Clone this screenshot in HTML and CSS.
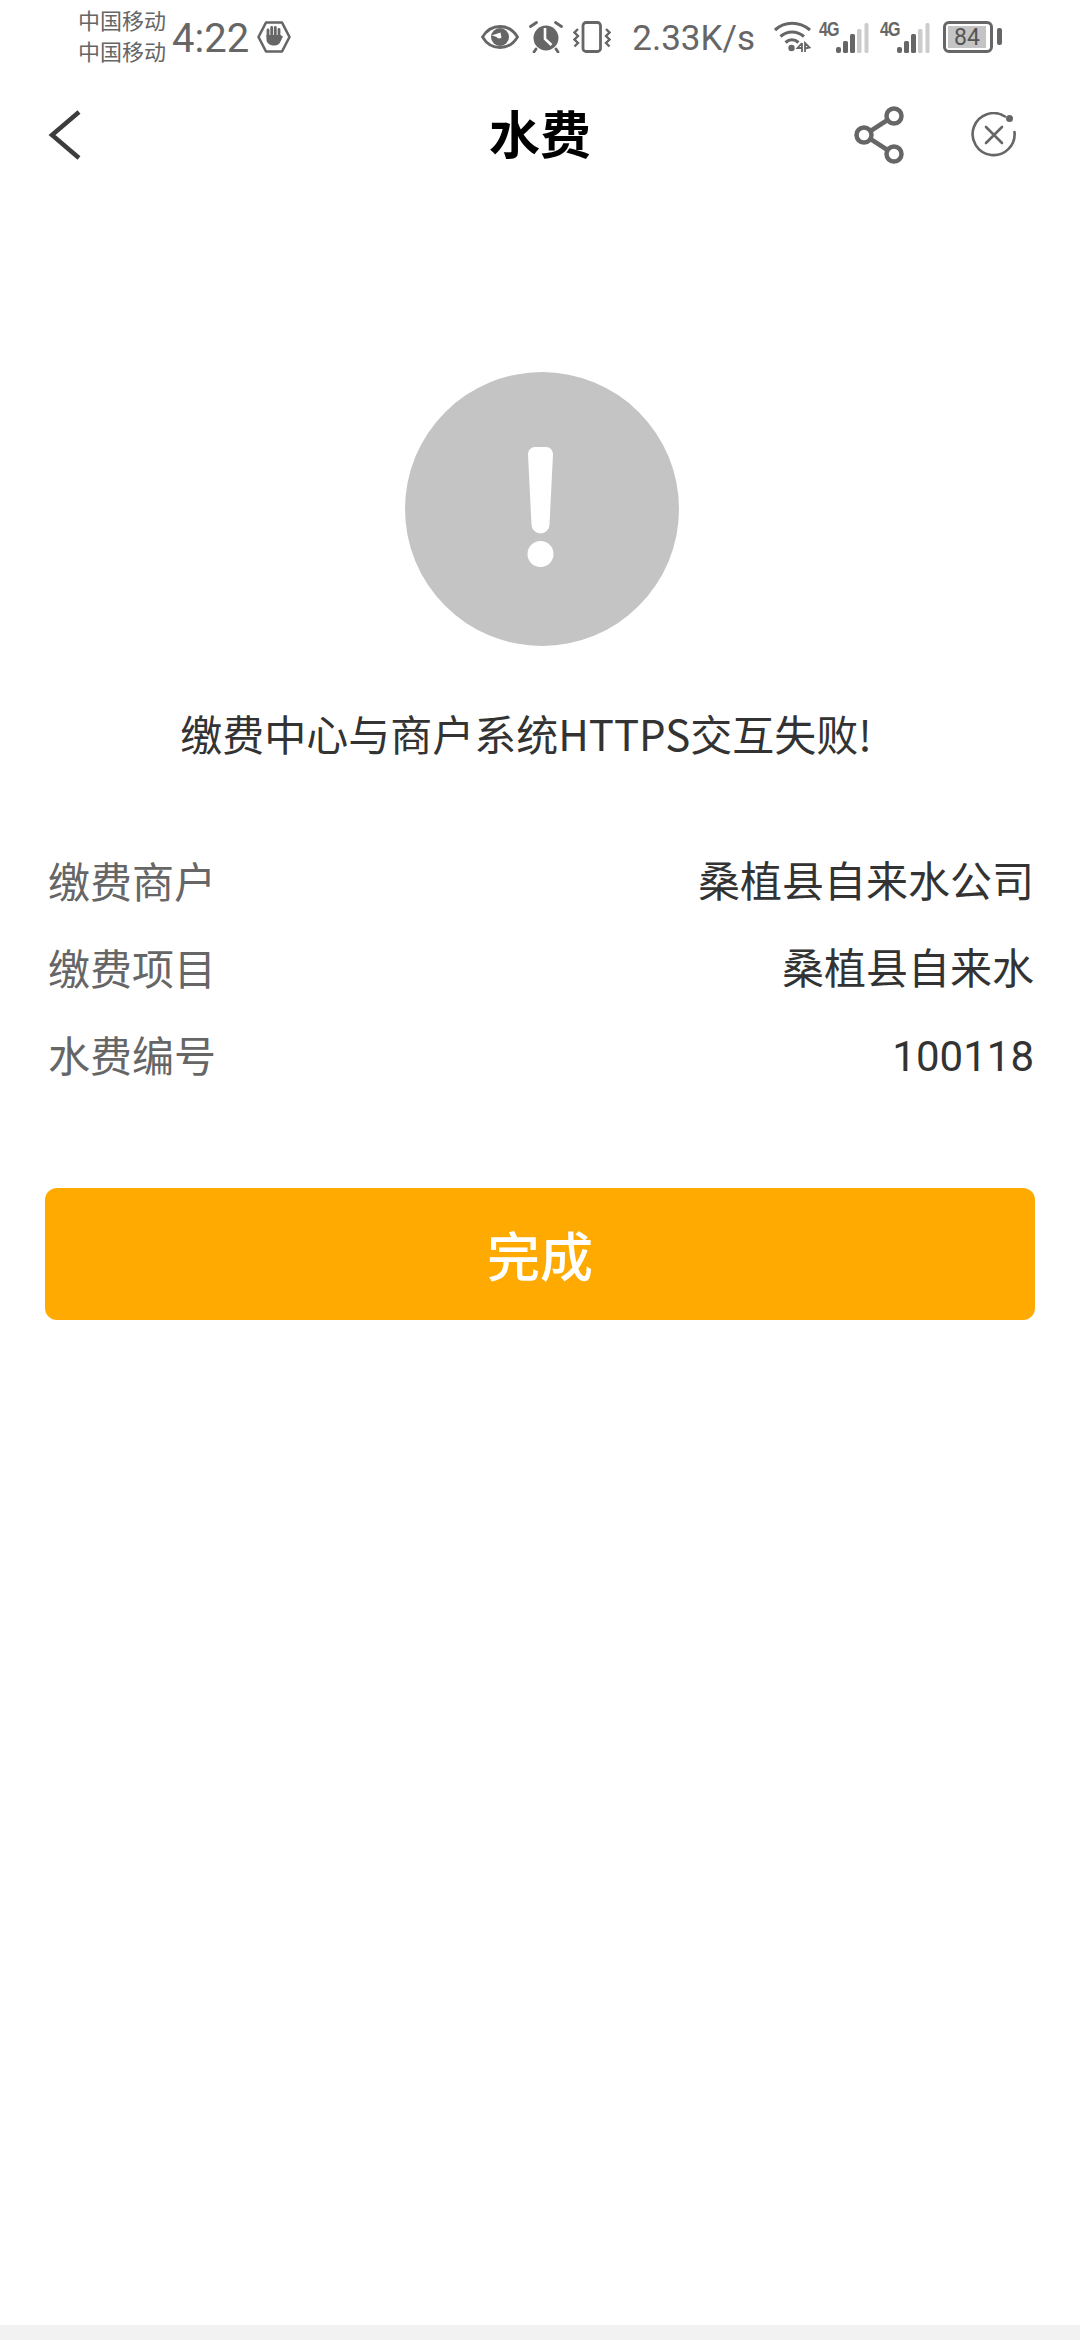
FILE: index.html
```html
<!DOCTYPE html>
<html lang="zh-CN">
<head>
    <meta charset="UTF-8">
    <meta name="viewport" content="width=device-width, initial-scale=1.0">
    <title>水费</title>
    <link rel="stylesheet" href="styles.css">
</head>
<body>
    <div class="page">
        <div class="status-bar">
            <div class="carriers">
                <span>中国移动</span>
                <span>中国移动</span>
            </div>
            <span class="clock">4:22</span>
            <svg class="ic-hand" width="34" height="32" viewBox="0 0 34 32">
                <path d="M9 1.500h16L32.500 16 25 30.500H9L1.500 16z" fill="none" stroke="#666" stroke-width="2.600" stroke-linejoin="round"/>
                <path d="M11 16V9M14.700 15V6.500M18.300 15V6.500M22 16V8.500" stroke="#666" stroke-width="2.800" stroke-linecap="round"/>
                <path d="M9.500 14h14l2.500 1.500c-1 2-1.500 3-2.500 5-1 2.500-3 4-6 4-4.500 0-7-1.500-8-5z" fill="#666"/>
            </svg>
            <div class="status-right">
                <svg class="ic-eye" width="38" height="24" viewBox="0 0 38 24">
                    <path d="M1.500 12C6 4.500 12 1.500 19 1.500S32 4.500 36.500 12C32 19.500 26 22.500 19 22.500S6 19.500 1.500 12z" fill="none" stroke="#666" stroke-width="2.800"/>
                    <circle cx="19" cy="12" r="9" fill="#666"/>
                    <path d="M10.500 10.500c2 .5 3 .5 5 1.500 1 1.500 3 2 5 .5l-1 -5z" fill="#fff"/>
                </svg>
                <svg class="ic-alarm" width="34" height="32" viewBox="0 0 34 32">
                    <circle cx="17" cy="17" r="12.500" fill="#666"/>
                    <path d="M16 7v11l6.500 6" stroke="#fff" stroke-width="2.600" fill="none"/>
                    <path d="M1.500 5.500l6-4M32.500 5.500l-6-4M7 28l-2 3M27 28l2 3" stroke="#666" stroke-width="2.800" stroke-linecap="round"/>
                </svg>
                <svg width="38" height="32" viewBox="0 0 38 32">
                    <rect x="10" y="1.500" width="17.500" height="29" rx="3" fill="none" stroke="#666" stroke-width="2.800"/>
                    <path d="M5 8L1.500 11.500l3.500 3.500-3.500 3.500 3.500 3.500-3.500 3.500M33 8l3.500 3.500-3.500 3.500 3.500 3.500-3.500 3.500 3.500 3.500" fill="none" stroke="#666" stroke-width="2.400"/>
                </svg>
                <span class="speed">2.33K/s</span>
                <svg width="38" height="32" viewBox="0 0 38 32">
                    <path d="M1 9C11 0 25 0 36 9M6.500 15.500c7-6 16-6 23.500 0M11.500 21.500c4-3.500 9-3.500 13 0" fill="none" stroke="#666" stroke-width="3.200"/>
                    <circle cx="17.500" cy="27" r="3.200" fill="#666"/>
                    <path d="M28 22v9M31 31v-9l4.500 4.500-4.500 1M28 22l-4.500 5h4.500" fill="none" stroke="#666" stroke-width="1.800"/>
                </svg>
                <div class="signal">
                    <span class="net-type">4G</span>
                    <svg width="33" height="31" viewBox="0 0 33 31">
                        <rect x="0" y="24" width="5" height="6" rx="2" fill="#666"/>
                        <rect x="7" y="18" width="5" height="12" rx="1.500" fill="#666"/>
                        <rect x="14" y="11" width="5" height="19" rx="1.500" fill="#666"/>
                        <rect x="21" y="6" width="4.500" height="24" rx="1.500" fill="#ccc"/>
                        <rect x="28.500" y="0" width="4" height="30" rx="1.500" fill="#ccc"/>
                    </svg>
                </div>
                <div class="signal">
                    <span class="net-type">4G</span>
                    <svg width="33" height="31" viewBox="0 0 33 31">
                        <rect x="0" y="24" width="5" height="6" rx="2" fill="#666"/>
                        <rect x="7" y="18" width="5" height="12" rx="1.500" fill="#666"/>
                        <rect x="14" y="11" width="5" height="19" rx="1.500" fill="#666"/>
                        <rect x="21" y="6" width="4.500" height="24" rx="1.500" fill="#ccc"/>
                        <rect x="28.500" y="0" width="4" height="30" rx="1.500" fill="#ccc"/>
                    </svg>
                </div>
                <div class="battery">
                    <div class="battery-body"><span class="battery-level">84</span></div>
                    <div class="battery-cap"></div>
                </div>
            </div>
        </div>

        <div class="title-bar">
            <svg width="36" height="52" viewBox="0 0 36 52">
                <path d="M33 3L6 26l27 23" fill="none" stroke="#3c3c3c" stroke-width="4.500"/>
            </svg>
            <h1>水费</h1>
            <svg class="share" width="54" height="58" viewBox="0 0 54 58">
                <circle cx="41" cy="10" r="7.500" fill="none" stroke="#666" stroke-width="4.500"/>
                <circle cx="41" cy="48" r="7.500" fill="none" stroke="#666" stroke-width="4.500"/>
                <circle cx="11" cy="29" r="7.500" fill="none" stroke="#666" stroke-width="4.500"/>
                <path d="M17.500 25l17-11M17.500 33l17 11" stroke="#666" stroke-width="4.500"/>
            </svg>
            <svg class="close" width="46" height="46" viewBox="0 0 46 46">
                <path d="M34 4.500A21 21 0 1 0 43.500 20" fill="none" stroke="#666" stroke-width="2.600" stroke-linecap="round"/>
                <circle cx="38.500" cy="6.500" r="3.500" fill="#666"/>
                <path d="M15 15l16 16M31 15L15 31" stroke="#666" stroke-width="2.600" stroke-linecap="round"/>
            </svg>
        </div>

        <div class="result">
            <svg width="274" height="274" viewBox="0 0 274 274">
                <circle cx="137" cy="137" r="137" fill="#c4c4c4"/>
                <path d="M130 75h11a7 7 0 0 1 7 7.500l-3.500 70a8.500 8.500 0 0 1-18 0l-3.500-70a7 7 0 0 1 7-7.500z" fill="#fff"/>
                <circle cx="135.500" cy="182" r="13" fill="#fff"/>
            </svg>
            <p class="message">缴费中心与商户系统HTTPS交互失败!</p>
        </div>

        <div class="details">
            <div class="row"><span class="label">缴费商户</span><span class="value">桑植县自来水公司</span></div>
            <div class="row"><span class="label">缴费项目</span><span class="value">桑植县自来水</span></div>
            <div class="row"><span class="label">水费编号</span><span class="value">100118</span></div>
        </div>

        <button class="done" type="button">完成</button>
    </div>
    <div class="bottom-strip"></div>
</body>
</html>
```

FILE: styles.css
```css
* {
    box-sizing: border-box;
}

html, body {
    margin: 0;
    padding: 0;
}

body {
    width: 1080px;
    height: 2340px;
    background: #fff;
    font-family: "Noto Sans CJK SC", "Noto Sans", sans-serif;
    display: flex;
    flex-direction: column;
    overflow: hidden;
}

.page {
    flex: 1;
}

.bottom-strip {
    height: 15px;
    background: #f2f2f2;
}

/* status bar */
.status-bar {
    height: 75px;
    display: flex;
    align-items: center;
    padding-left: 78px;
    padding-bottom: 2px;
    color: #666;
}

.carriers {
    display: flex;
    flex-direction: column;
    font-size: 22px;
    line-height: 31px;
    width: 94px;
    margin-bottom: 3px;
}

.clock {
    font-family: Roboto, sans-serif;
    font-size: 40px;
    width: 85px;
    margin-top: 3px;
}

.status-right {
    margin-left: auto;
    display: flex;
    align-items: center;
    gap: 10px;
    padding-right: 78px;
}

.ic-eye {
    margin-right: -2px;
}

.ic-alarm {
    margin-left: 2px;
}

.speed {
    font-family: Roboto, sans-serif;
    font-size: 35px;
    margin: 3px 9px 0 11px;
}

.signal {
    width: 50px;
    height: 34px;
    margin-left: -3px;
    display: flex;
    align-items: flex-end;
}

.signal + .signal {
    margin-left: 1px;
}

.net-type {
    align-self: flex-start;
    width: 17px;
    font-family: "Liberation Sans", sans-serif;
    font-size: 16px;
    font-weight: 700;
    line-height: 16px;
    letter-spacing: -1px;
    transform: scaleY(1.25);
    transform-origin: top left;
}

.battery {
    display: flex;
    align-items: center;
    gap: 4px;
    margin-left: 3px;
}

.battery-body {
    width: 50px;
    height: 32px;
    border: 3px solid #666;
    border-radius: 6px;
    padding: 2px;
}

.battery-level {
    display: block;
    width: 38px;
    height: 22px;
    background: #c4c4c4;
    font-family: Roboto, sans-serif;
    font-size: 23px;
    line-height: 23px;
    text-align: center;
    color: #555;
}

.battery-cap {
    width: 5px;
    height: 17px;
    background: #666;
    border-radius: 2px;
}

/* title bar */
.title-bar {
    height: 120px;
    display: flex;
    align-items: center;
    position: relative;
    padding-left: 46px;
}

.title-bar h1 {
    position: absolute;
    left: 0;
    right: 0;
    margin: -6px 0 0;
    text-align: center;
    font-size: 51px;
    font-weight: 700;
    color: #000;
}

.share {
    margin-left: auto;
}

.close {
    margin: 0 63px 0 64px;
}

/* result */
.result {
    display: flex;
    flex-direction: column;
    align-items: center;
    padding-top: 177px;
    padding-left: 3px;
}

.message {
    margin: 57px 0 0 -31px;
    font-size: 42px;
    line-height: 60px;
    color: #333;
}

/* details */
.details {
    padding: 73px 46px 0 48px;
}

.row {
    display: flex;
    justify-content: space-between;
    height: 87px;
    line-height: 87px;
    font-size: 42px;
}

.label {
    color: #666;
}

.value {
    font-family: Roboto, "Noto Sans CJK SC", sans-serif;
    color: #333;
    padding-top: 3px;
}

.done {
    display: block;
    width: 990px;
    height: 132px;
    margin: 91px 0 0 45px;
    background: #ffaa00;
    color: #fff;
    border: none;
    border-radius: 12px;
    font-family: inherit;
    font-size: 53px;
    font-weight: 500;
}
```
